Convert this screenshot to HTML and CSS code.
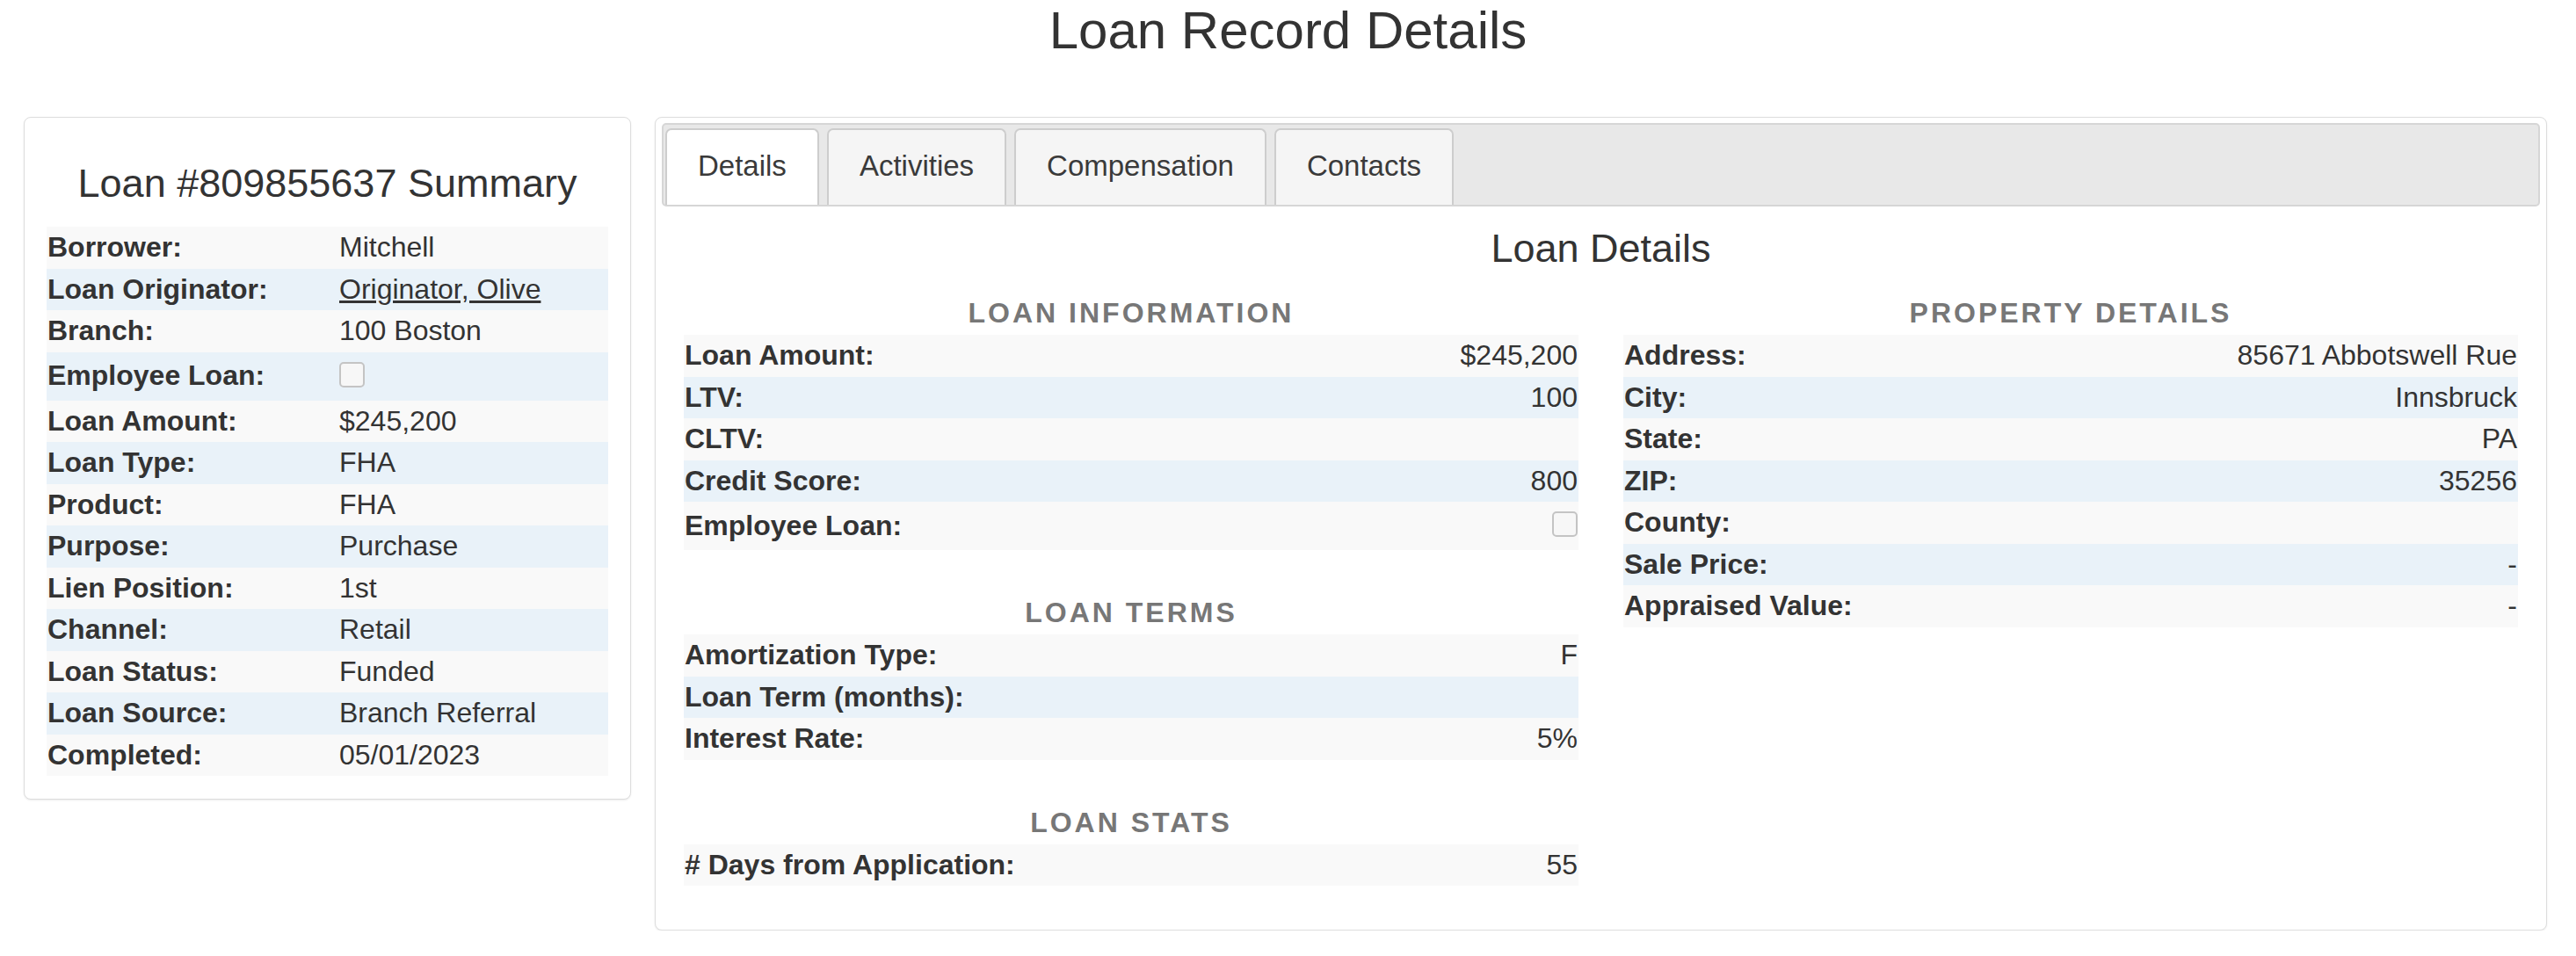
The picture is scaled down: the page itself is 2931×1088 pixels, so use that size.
FILE: index.html
```html
<!DOCTYPE html>
<html lang="en">

<head>
    <meta charset="UTF-8">
    <meta name="viewport" content="width=device-width, initial-scale=1.0">
    <title>Loan Record Details</title>
    <link rel="stylesheet" href="styles.css">
</head>

<body>
<h1 class="page-title">Loan Record Details</h1>

<div class="layout">
    <div class="card summary">
        <h2 class="summary-title">Loan #809855637 Summary</h2>
        <table class="info-table summary-table">
            <tr><td class="lbl">Borrower:</td><td>Mitchell</td></tr>
            <tr><td class="lbl">Loan Originator:</td><td><a href="#">Originator, Olive</a></td></tr>
            <tr><td class="lbl">Branch:</td><td>100 Boston</td></tr>
            <tr><td class="lbl">Employee Loan:</td><td><input type="checkbox" class="chk" disabled></td></tr>
            <tr><td class="lbl">Loan Amount:</td><td>$245,200</td></tr>
            <tr><td class="lbl">Loan Type:</td><td>FHA</td></tr>
            <tr><td class="lbl">Product:</td><td>FHA</td></tr>
            <tr><td class="lbl">Purpose:</td><td>Purchase</td></tr>
            <tr><td class="lbl">Lien Position:</td><td>1st</td></tr>
            <tr><td class="lbl">Channel:</td><td>Retail</td></tr>
            <tr><td class="lbl">Loan Status:</td><td>Funded</td></tr>
            <tr><td class="lbl">Loan Source:</td><td>Branch Referral</td></tr>
            <tr><td class="lbl">Completed:</td><td>05/01/2023</td></tr>
        </table>
    </div>

    <div class="card record">
        <ul class="tabs">
            <li class="tab active">Details</li>
            <li class="tab">Activities</li>
            <li class="tab">Compensation</li>
            <li class="tab">Contacts</li>
        </ul>

        <div class="tab-body">
            <h3 class="section-title">Loan Details</h3>
            <div class="columns">
                <div class="col">
                    <div class="group">
                        <h4 class="group-title">LOAN INFORMATION</h4>
                        <table class="info-table detail-table">
                            <tr><td class="lbl">Loan Amount:</td><td class="val">$245,200</td></tr>
                            <tr><td class="lbl">LTV:</td><td class="val">100</td></tr>
                            <tr><td class="lbl">CLTV:</td><td class="val"></td></tr>
                            <tr><td class="lbl">Credit Score:</td><td class="val">800</td></tr>
                            <tr><td class="lbl">Employee Loan:</td><td class="val"><input type="checkbox" class="chk" disabled></td></tr>
                        </table>
                    </div>
                    <div class="group">
                        <h4 class="group-title">LOAN TERMS</h4>
                        <table class="info-table detail-table">
                            <tr><td class="lbl">Amortization Type:</td><td class="val">F</td></tr>
                            <tr><td class="lbl">Loan Term (months):</td><td class="val"></td></tr>
                            <tr><td class="lbl">Interest Rate:</td><td class="val">5%</td></tr>
                        </table>
                    </div>
                    <div class="group">
                        <h4 class="group-title">LOAN STATS</h4>
                        <table class="info-table detail-table">
                            <tr><td class="lbl"># Days from Application:</td><td class="val">55</td></tr>
                        </table>
                    </div>
                </div>

                <div class="col">
                    <div class="group">
                        <h4 class="group-title">PROPERTY DETAILS</h4>
                        <table class="info-table detail-table">
                            <tr><td class="lbl">Address:</td><td class="val">85671 Abbotswell Rue</td></tr>
                            <tr><td class="lbl">City:</td><td class="val">Innsbruck</td></tr>
                            <tr><td class="lbl">State:</td><td class="val">PA</td></tr>
                            <tr><td class="lbl">ZIP:</td><td class="val">35256</td></tr>
                            <tr><td class="lbl">County:</td><td class="val"></td></tr>
                            <tr><td class="lbl">Sale Price:</td><td class="val">-</td></tr>
                            <tr><td class="lbl">Appraised Value:</td><td class="val">-</td></tr>
                        </table>
                    </div>
                </div>
            </div>
        </div>
    </div>
</div>
</body>

</html>
```

FILE: styles.css
```css
body {
    margin: 0;
    font-family: "Liberation Sans", Arial, sans-serif;
    font-size: 32px;
    color: #333;
    background: #fff;
}
.page-title {
    margin: 0;
    padding-top: 2px;
    font-size: 60px;
    font-weight: normal;
    line-height: 66px;
    text-align: center;
}
.layout {
    display: flex;
    align-items: flex-start;
    gap: 27px;
    margin-top: 65px;
    padding: 0 33px 0 27px;
}
.card {
    box-sizing: border-box;
    background: #fff;
    border: 1px solid #ddd;
    border-radius: 8px;
    box-shadow: 0 1px 2px rgba(0,0,0,0.08);
}
.summary {
    width: 691px;
    flex: none;
    padding: 26px 25px;
}
.summary-title {
    margin: 24px 0;
    font-size: 45px;
    font-weight: normal;
    line-height: 50px;
    text-align: center;
}
.record {
    flex: 1;
    padding: 6px 7px 7px;
}

/* tables */
.info-table {
    width: 100%;
    border-collapse: collapse;
}
.info-table td {
    padding: 5px 1px;
    line-height: 37.5px;
    vertical-align: middle;
}
.info-table tr:nth-child(odd) td {
    background: #f9f9f9;
}
.info-table tr:nth-child(even) td {
    background: #e9f2f9;
}
.info-table .lbl {
    font-weight: bold;
}
.summary-table .lbl {
    width: 330px;
}
.detail-table .val {
    text-align: right;
}
.info-table a {
    color: #333;
    text-decoration: underline;
}
.chk {
    appearance: none;
    -webkit-appearance: none;
    display: block;
    box-sizing: border-box;
    width: 29px;
    height: 29px;
    margin: 6px 0 10px;
    border: 2px solid #c4c4c4;
    border-radius: 5px;
    background: #f7f7f7;
}
.detail-table .chk {
    margin-left: auto;
}

/* tabs */
.tabs {
    display: flex;
    gap: 9px;
    margin: 0;
    padding: 4px 0 0 2px;
    list-style: none;
    background: #e8e8e8;
    border: 2px solid #d6d6d6;
    border-radius: 5px;
}
.tab {
    padding: 21px 35px 24px;
    font-size: 33px;
    line-height: 40px;
    color: #3a3a3a;
    background: #f5f5f5;
    border: 2px solid #cdcdcd;
    border-bottom: 0;
    border-radius: 7px 7px 0 0;
}
.tab.active {
    background: #fff;
}

.tab-body {
    padding: 0 25px 43px;
}
.section-title {
    margin: 23px 0 30px;
    font-size: 45px;
    font-weight: normal;
    line-height: 50px;
    text-align: center;
}
.columns {
    display: flex;
    gap: 51px;
}
.col {
    flex: 1;
}
.group + .group {
    margin-top: 53px;
}
.group-title {
    margin: 0 0 6px;
    font-size: 32px;
    line-height: 37px;
    font-weight: bold;
    letter-spacing: 3px;
    color: #777;
    text-align: center;
}
```
